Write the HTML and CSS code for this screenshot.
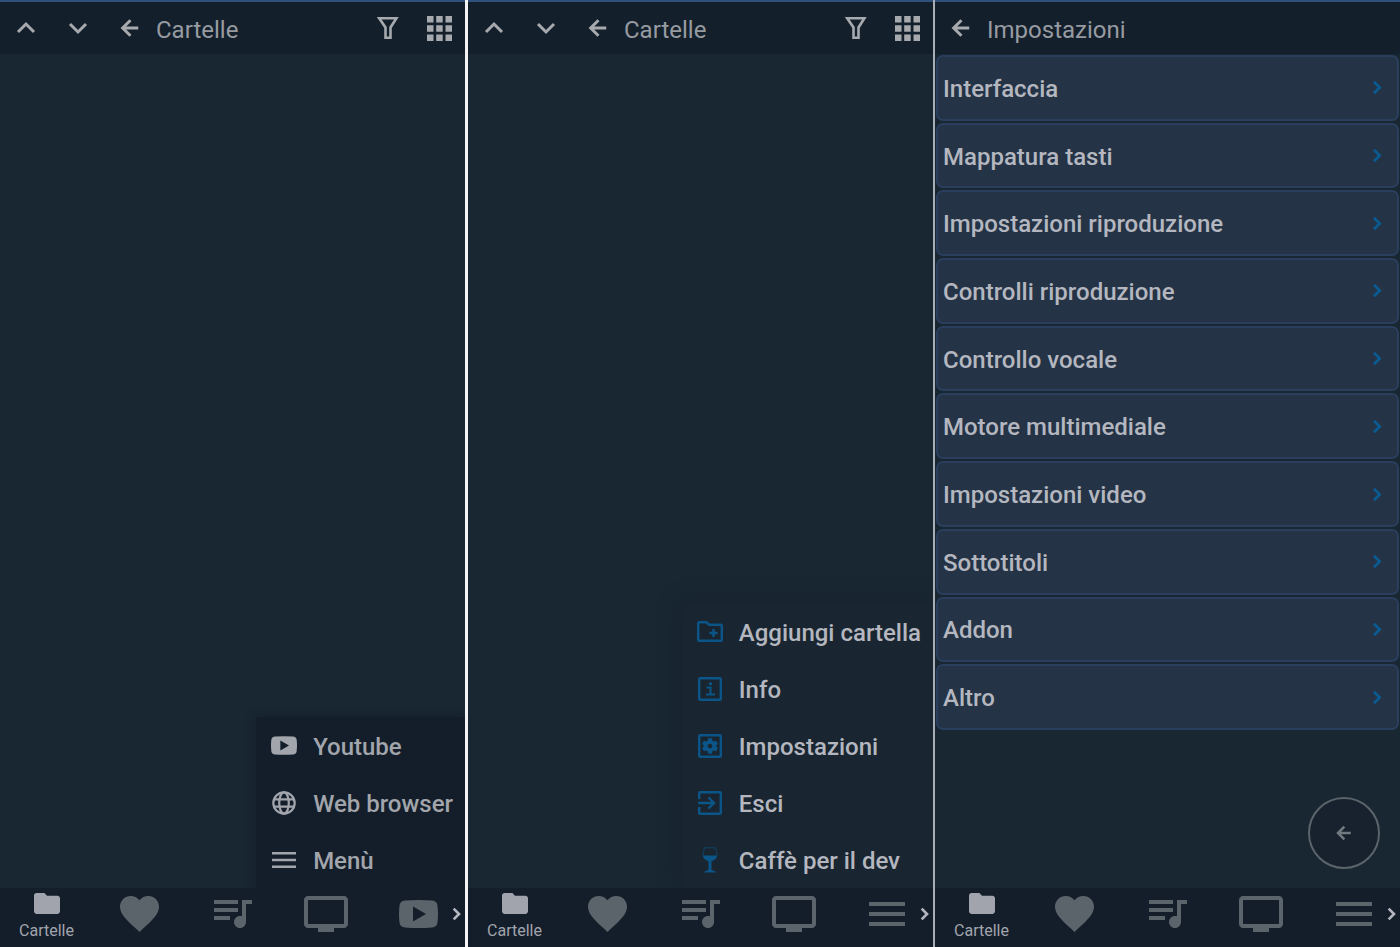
FILE: index.html
```html
<!DOCTYPE html>
<html lang="it">
<head>
<meta charset="utf-8">
<title>Cartelle e impostazioni</title>
<link rel="stylesheet" href="styles.css">
</head>
<body>
<svg class="sprite" aria-hidden="true">
  <symbol id="up" viewBox="0 0 24 24"><path d="M4 16l8-8 8 8" fill="none" stroke="currentColor" stroke-width="3"/></symbol>
  <symbol id="down" viewBox="0 0 24 24"><path d="M4 8l8 8 8-8" fill="none" stroke="currentColor" stroke-width="3"/></symbol>
  <symbol id="right" viewBox="0 0 24 24"><path d="M7 4l8 8-8 8" fill="none" stroke="currentColor" stroke-width="4"/></symbol>
  <symbol id="back" viewBox="0 0 24 24"><path d="M21 12H5M12.500 3.500L4 12l8.500 8.500" fill="none" stroke="currentColor" stroke-width="3.300"/></symbol>
  <symbol id="filter" viewBox="0 0 24 24"><path d="M4.200 2.200h17.200L15.500 11.500v10.300h-5V11.500z" fill="none" stroke="currentColor" stroke-width="2.600"/></symbol>
  <symbol id="grid" viewBox="0 0 25 25"><path d="M0 0h6.500v6.500H0zM9.200 0h6.500v6.500H9.200zM18.500 0H25v6.500h-6.500zM0 9.200h6.500v6.500H0zM9.200 9.200h6.500v6.500H9.200zM18.500 9.200H25v6.500h-6.500zM0 18.500h6.500V25H0zM9.200 18.500h6.500V25H9.200zM18.500 18.500H25V25h-6.500z" fill="currentColor"/></symbol>
  <symbol id="folder" viewBox="2 4 20 16"><path d="M10 4H4c-1.100 0-2 .9-2 2v12c0 1.100.9 2 2 2h16c1.100 0 2-.9 2-2V8c0-1.100-.9-2-2-2h-8z" fill="currentColor"/></symbol>
  <symbol id="heart" viewBox="2 3 20 18.350"><path d="M12 21.350l-1.450-1.320C5.400 15.360 2 12.280 2 8.500 2 5.420 4.420 3 7.500 3c1.740 0 3.410.81 4.500 2.090C13.090 3.810 14.760 3 16.500 3 19.580 3 22 5.420 22 8.500c0 3.780-3.400 6.860-8.550 11.540z" fill="currentColor"/></symbol>
  <symbol id="queue" viewBox="3 6 19 14"><path d="M15 6H3v2h12zm0 4H3v2h12zM3 16h8v-2H3zM17 6v8.180c-.31-.11-.65-.18-1-.18-1.660 0-3 1.340-3 3s1.340 3 3 3 3-1.340 3-3V8h3V6z" fill="currentColor"/></symbol>
  <symbol id="screen" viewBox="1 3 22 18"><path d="M21 3H3c-1.100 0-2 .9-2 2v12c0 1.100.9 2 2 2h5v2h8v-2h5c1.100 0 2-.9 2-2V5c0-1.100-.9-2-2-2zm0 14H3V5h18z" fill="currentColor"/></symbol>
  <symbol id="video" viewBox="0 0 39 28"><path d="M6 .5Q19.500-.5 33 .5q5 .5 5.500 5 1 8.500 0 17-.5 4.500-5.500 5-13.500 1-27 0-5-.5-5.500-5-1-8.500 0-17Q1 1 6 .5zM14 6.500v15L27 14z" fill="currentColor" fill-rule="evenodd"/></symbol>
  <symbol id="lines" viewBox="0 0 36 24"><path d="M0 0h36v4H0zM0 10h36v4H0zM0 20h36v4H0z" fill="currentColor"/></symbol>
  <symbol id="lines-thin" viewBox="0 0 24 16"><path d="M0 0h24v2.400H0zM0 6.800h24v2.400H0zM0 13.600h24V16H0z" fill="currentColor"/></symbol>
  <symbol id="globe" viewBox="0 0 24 24"><g fill="none" stroke="currentColor" stroke-width="2.200"><circle cx="12" cy="12" r="10.700"/><ellipse cx="12" cy="12" rx="4.800" ry="10.700"/><path d="M2 8.300h20M2 15.700h20"/></g></symbol>
  <symbol id="add-folder" viewBox="0 0 26 21"><path d="M1.200 2.200q0-1 1-1h7.300l2.500 2.500h11.800q1 0 1 1v14q0 1-1 1H2.200q-1 0-1-1z" fill="none" stroke="currentColor" stroke-width="2.400"/><path d="M12.500 12h8M16.500 8v8" fill="none" stroke="currentColor" stroke-width="2.400"/></symbol>
  <symbol id="info" viewBox="0 0 24 24"><rect x="1.200" y="1.200" width="21.600" height="21.600" rx="1" fill="none" stroke="currentColor" stroke-width="2.400"/><path d="M8.500 10.500h4v7M8 17.500h9" fill="none" stroke="currentColor" stroke-width="2"/><path d="M11 5.500h3v2.600h-3z" fill="currentColor"/></symbol>
  <symbol id="gear" viewBox="0 0 24 24"><rect x="1.200" y="1.200" width="21.600" height="21.600" rx="1" fill="none" stroke="currentColor" stroke-width="2.400"/><path d="M10.100 4.300h3.800l.5 2.400 1.400.8 2.300-.8 1.900 3.300-1.800 1.600v.8l1.800 1.600-1.900 3.300-2.300-.8-1.400.8-.5 2.400h-3.800l-.5-2.400-1.400-.8-2.300.8L4 14l1.800-1.600v-.8L4 10l1.900-3.300 2.300.8 1.400-.8zM12 9.700a2.300 2.300 0 1 0 0 4.600 2.300 2.300 0 0 0 0-4.600z" fill="currentColor" fill-rule="evenodd"/></symbol>
  <symbol id="exit" viewBox="0 0 24 24"><path d="M1.200 8V2.200q0-1 1-1h19.600q1 0 1 1v19.600q0 1-1 1H2.200q-1 0-1-1V16M0 12h15M10.500 6.500L16 12l-5.500 5.500" fill="none" stroke="currentColor" stroke-width="2.400"/></symbol>
  <symbol id="glass" viewBox="0 0 16 26"><path d="M2.500.8h11Q16.500 9 13 12.300 10.500 14 8 14T3 12.300Q-.5 9 2.500.8z" fill="none" stroke="currentColor" stroke-width="1" opacity=".6"/><path d="M1 8.500h14q-.5 4-5.500 5.500v9l4 1.500v1h-11v-1l4-1.500v-9Q1.500 12.500 1 8.500z" fill="currentColor"/></symbol>
</svg>
<main class="panels">
  <section class="panel">
    <header class="bar">
      <button class="tool" aria-label="Su"><svg class="i24"><use href="#up"/></svg></button>
      <button class="tool" aria-label="Giù"><svg class="i24"><use href="#down"/></svg></button>
      <button class="tool" aria-label="Indietro"><svg class="i22"><use href="#back"/></svg></button>
      <h1 class="title">Cartelle</h1>
      <button class="tool" aria-label="Filtro"><svg class="i24"><use href="#filter"/></svg></button>
      <button class="tool" aria-label="Griglia"><svg class="i25"><use href="#grid"/></svg></button>
    </header>
    <div class="body">
      <div class="menu menu-dark">
        <button class="menu-item"><span class="menu-icon"><svg class="video-small"><use href="#video"/></svg></span><span class="label">Youtube</span></button>
        <button class="menu-item"><span class="menu-icon"><svg class="i24"><use href="#globe"/></svg></span><span class="label">Web browser</span></button>
        <button class="menu-item"><span class="menu-icon"><svg class="lines-small"><use href="#lines-thin"/></svg></span><span class="label">Menù</span></button>
      </div>
    </div>
    <nav class="nav">
      <button class="tab active"><svg class="folder"><use href="#folder"/></svg>Cartelle</button>
      <button class="tab" aria-label="Preferiti"><svg class="heart"><use href="#heart"/></svg></button>
      <button class="tab" aria-label="Coda"><svg class="queue"><use href="#queue"/></svg></button>
      <button class="tab" aria-label="Schermo"><svg class="screen"><use href="#screen"/></svg></button>
      <button class="tab" aria-label="Youtube"><svg class="video"><use href="#video"/></svg></button>
      <svg class="more"><use href="#right"/></svg>
    </nav>
  </section>
  <section class="panel panel-second">
    <header class="bar">
      <button class="tool" aria-label="Su"><svg class="i24"><use href="#up"/></svg></button>
      <button class="tool" aria-label="Giù"><svg class="i24"><use href="#down"/></svg></button>
      <button class="tool" aria-label="Indietro"><svg class="i22"><use href="#back"/></svg></button>
      <h1 class="title">Cartelle</h1>
      <button class="tool" aria-label="Filtro"><svg class="i24"><use href="#filter"/></svg></button>
      <button class="tool" aria-label="Griglia"><svg class="i25"><use href="#grid"/></svg></button>
    </header>
    <div class="body">
      <div class="menu menu-light">
        <button class="menu-item"><span class="menu-icon"><svg class="add-folder"><use href="#add-folder"/></svg></span><span class="label">Aggiungi cartella</span></button>
        <button class="menu-item"><span class="menu-icon"><svg class="i24"><use href="#info"/></svg></span><span class="label">Info</span></button>
        <button class="menu-item"><span class="menu-icon"><svg class="i24"><use href="#gear"/></svg></span><span class="label">Impostazioni</span></button>
        <button class="menu-item"><span class="menu-icon"><svg class="i24"><use href="#exit"/></svg></span><span class="label">Esci</span></button>
        <button class="menu-item"><span class="menu-icon"><svg class="glass"><use href="#glass"/></svg></span><span class="label">Caffè per il dev</span></button>
      </div>
    </div>
    <nav class="nav">
      <button class="tab active"><svg class="folder"><use href="#folder"/></svg>Cartelle</button>
      <button class="tab" aria-label="Preferiti"><svg class="heart"><use href="#heart"/></svg></button>
      <button class="tab" aria-label="Coda"><svg class="queue"><use href="#queue"/></svg></button>
      <button class="tab" aria-label="Schermo"><svg class="screen"><use href="#screen"/></svg></button>
      <button class="tab" aria-label="Menù"><svg class="lines"><use href="#lines"/></svg></button>
      <svg class="more"><use href="#right"/></svg>
    </nav>
  </section>
  <section class="panel panel-third">
    <header class="bar">
      <button class="tool" aria-label="Indietro"><svg class="i22"><use href="#back"/></svg></button>
      <h1 class="title">Impostazioni</h1>
    </header>
    <div class="body">
      <div class="settings">
        <button class="setting"><span class="label">Interfaccia</span><svg class="chevron"><use href="#right"/></svg></button>
        <button class="setting"><span class="label">Mappatura tasti</span><svg class="chevron"><use href="#right"/></svg></button>
        <button class="setting"><span class="label">Impostazioni riproduzione</span><svg class="chevron"><use href="#right"/></svg></button>
        <button class="setting"><span class="label">Controlli riproduzione</span><svg class="chevron"><use href="#right"/></svg></button>
        <button class="setting"><span class="label">Controllo vocale</span><svg class="chevron"><use href="#right"/></svg></button>
        <button class="setting"><span class="label">Motore multimediale</span><svg class="chevron"><use href="#right"/></svg></button>
        <button class="setting"><span class="label">Impostazioni video</span><svg class="chevron"><use href="#right"/></svg></button>
        <button class="setting"><span class="label">Sottotitoli</span><svg class="chevron"><use href="#right"/></svg></button>
        <button class="setting"><span class="label">Addon</span><svg class="chevron"><use href="#right"/></svg></button>
        <button class="setting"><span class="label">Altro</span><svg class="chevron"><use href="#right"/></svg></button>
      </div>
      <button class="fab" aria-label="Indietro"><svg class="fab-icon"><use href="#back"/></svg></button>
    </div>
    <nav class="nav">
      <button class="tab active"><svg class="folder"><use href="#folder"/></svg>Cartelle</button>
      <button class="tab" aria-label="Preferiti"><svg class="heart"><use href="#heart"/></svg></button>
      <button class="tab" aria-label="Coda"><svg class="queue"><use href="#queue"/></svg></button>
      <button class="tab" aria-label="Schermo"><svg class="screen"><use href="#screen"/></svg></button>
      <button class="tab" aria-label="Menù"><svg class="lines"><use href="#lines"/></svg></button>
      <svg class="more"><use href="#right"/></svg>
    </nav>
  </section>
</main>
</body>
</html>
```
FILE: styles.css
```css
* { box-sizing: border-box; }
body {
  margin: 0;
  background: #192732;
  color: #b4b7bf;
  font-family: Roboto, "Liberation Sans", sans-serif;
}
button {
  margin: 0;
  padding: 0;
  border: 0;
  background: none;
  color: inherit;
  font: inherit;
}
svg { display: block; flex: none; }
.sprite { position: absolute; width: 0; height: 0; }

.panels {
  display: grid;
  grid-template-columns: minmax(0, 1fr) 3px minmax(0, 1fr) 2px minmax(0, 1fr);
  min-height: 100vh;
  background: linear-gradient(to right, #f4f4f4 50%, #a9aeb4 50%);
}
.panel {
  display: flex;
  flex-direction: column;
  overflow: hidden;
  background: #192732;
}
.panel-second { grid-column: 3; }
.panel-third { grid-column: 5; }

.bar {
  display: flex;
  align-items: center;
  height: 54px;
  border-top: 2px solid #30517c;
  background: #131f2b;
  color: #a6a9ad;
}
.tool {
  display: grid;
  place-items: center;
  width: 52px;
  height: 52px;
}
.title {
  flex: 1;
  margin: 0;
  padding-top: 3px;
  font-size: 24px;
  line-height: 28px;
  font-weight: 400;
  color: #979ba1;
}
.i22 { width: 22px; height: 22px; }
.i24 { width: 24px; height: 24px; }
.i25 { width: 25px; height: 25px; }

.body {
  position: relative;
  flex: 1;
}
.menu {
  position: absolute;
  right: 0;
  bottom: 0;
  display: flex;
  flex-direction: column;
  padding: 0 12px 0 14px;
}
.menu-dark {
  background: #131e2a;
  box-shadow: 0 0 8px #151e29;
  color: #a2a5ab;
}
.menu-light {
  background: #192631;
  box-shadow: 0 0 18px #18232f;
}
.menu-light svg { color: #0b5588; }
.menu-item {
  display: flex;
  align-items: center;
  gap: 15px;
  height: 57px;
  font-size: 24px;
  font-weight: 500;
  white-space: nowrap;
}
.label { padding-top: 2px; }
.menu-icon {
  display: grid;
  place-items: center;
  width: 28px;
}
.video-small { width: 26px; height: 19px; }
.lines-small { width: 24px; height: 16px; }
.add-folder { width: 26px; height: 21px; }
.glass { width: 16px; height: 26px; }

.settings {
  display: grid;
  grid-auto-rows: 1fr;
  gap: 2px;
  min-height: 677px;
  padding: 1px;
}
.setting {
  display: flex;
  align-items: center;
  justify-content: space-between;
  padding: 0 11px 0 5px;
  border: 2px solid #293f5d;
  border-radius: 7px;
  background: #243346;
  font-size: 24px;
  font-weight: 500;
  text-align: left;
}
.chevron { width: 17px; height: 17px; color: #0b5a90; }
.fab {
  position: absolute;
  right: 20px;
  bottom: 19px;
  display: grid;
  place-items: center;
  width: 72px;
  height: 72px;
  border: 2px solid #5b636b;
  border-radius: 50%;
  background: #17222e;
  color: #727a81;
}
.fab-icon { width: 18px; height: 18px; }

.nav {
  position: relative;
  display: grid;
  grid-template-columns: repeat(5, 1fr);
  height: 59px;
  background: #131e2a;
}
.tab {
  display: flex;
  flex-direction: column;
  align-items: center;
  justify-content: center;
  padding-bottom: 7px;
  color: #5c646b;
}
.active {
  justify-content: start;
  gap: 7px;
  padding: 5px 0 0;
  color: #a2a4ad;
  font-size: 16px;
  line-height: 19px;
}
.folder { width: 26px; height: 21px; }
.heart { width: 39px; height: 36px; }
.queue { width: 38px; height: 28px; }
.screen { width: 44px; height: 36px; }
.video { width: 39px; height: 28px; }
.lines { width: 36px; height: 24px; }
.more {
  position: absolute;
  right: 0;
  top: 18px;
  width: 16px;
  height: 16px;
  color: #b4b7bf;
}
```
